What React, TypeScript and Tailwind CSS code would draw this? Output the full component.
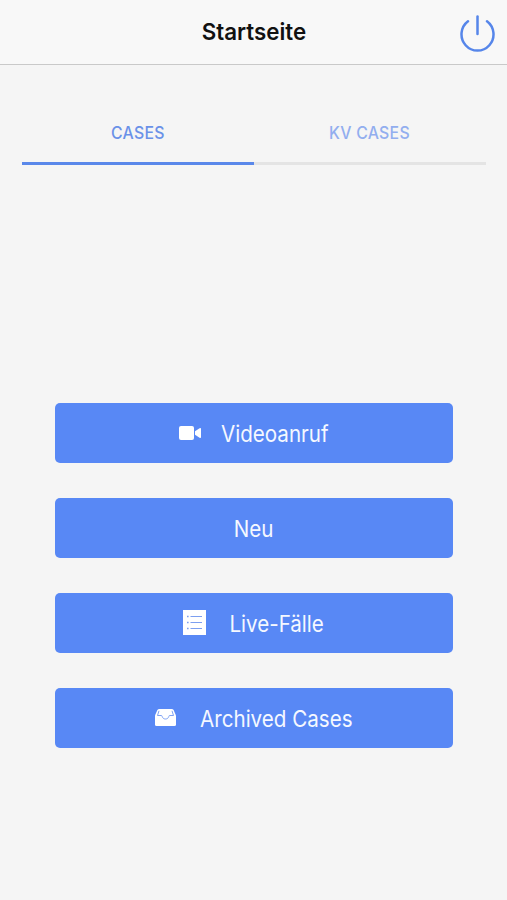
import type { ReactNode } from 'react';

const tabs = [
  { label: 'CASES', active: true },
  { label: 'KV CASES', active: false },
];

const PowerIcon = () => (
  <svg className="h-[38px] w-[36px]" viewBox="0 0 36 38" fill="none" stroke="#5686ea" strokeWidth="2.5" strokeLinecap="round">
    <path d="M18.5 2.5V20" />
    <path d="M9 7.2A16 16.3 0 1 0 28 7.2" />
  </svg>
);

const VideoIcon = () => (
  <svg className="h-[14px] w-[22px]" viewBox="0 0 22 14" fill="currentColor">
    <rect width="15" height="14" rx="2" />
    <path d="M16 5.2L20.6 2.3Q22 1.6 22 3V11Q22 12.4 20.6 11.7L16 8.8Z" />
  </svg>
);

const ListIcon = () => (
  <svg className="h-[25px] w-[23px]" viewBox="0 0 23 25">
    <path d="M0 0H23V25H0Z" fill="currentColor" />
    <g stroke="#7d9ff0" strokeWidth="1">
      <path d="M7.5 6.5H19M7.5 12.5H19M7.5 18.5H19" />
      <path d="M4 6.5H5.6M4 12.5H5.6M4 18.5H5.6" strokeWidth="1.6" />
    </g>
  </svg>
);

const ArchiveIcon = () => (
  <svg className="h-[17px] w-[21px]" viewBox="0 0 21 17">
    <path d="M4.4 0H16.6Q18 0 18.6 1L21 6.500V15.500Q21 17 19.500 17H1.500Q0 17 0 15.500V6.500L2.400 1Q3 0 4.400 0Z" fill="currentColor" />
    <path
      d="M4 1.800L2.500 6.500H6.500C7.300 6.500 7 10 10.500 10S13.700 6.500 14.500 6.500H18.500L17 1.800"
      fill="none"
      stroke="#7097f3"
      strokeWidth="0.9"
    />
  </svg>
);

type Action = { label: string; icon?: ReactNode; gap: string; text: string };

const actions: Action[] = [
  { label: 'Videoanruf', icon: <VideoIcon />, gap: 'gap-[21px]', text: 'w-[107px]' },
  { label: 'Neu', gap: '', text: 'w-[39px]' },
  { label: 'Live-Fälle', icon: <ListIcon />, gap: 'gap-[24px]', text: 'w-[95px]' },
  { label: 'Archived Cases', icon: <ArchiveIcon />, gap: 'gap-[24px]', text: 'w-[153px]' },
];

export default function App() {
  return (
    <div className="flex h-[900px] w-[507px] flex-col bg-[#f5f5f5] font-['Inter','Liberation_Sans',sans-serif]">
      <header className="grid h-[65px] grid-cols-[48px_1fr_48px] items-center border-b border-[#c9c9c9] bg-[#f8f8f8]">
        <h1 className="col-start-2 flex justify-center text-[23.5px] font-semibold text-[#111]">
          <span className="scale-x-[0.95]">Startseite</span>
        </h1>
        <button aria-label="Abmelden" className="pt-[2px]">
          <PowerIcon />
        </button>
      </header>

      <nav className="mt-[44px] mr-[21px] ml-[22px] flex">
        {tabs.map((tab) => (
          <button
            key={tab.label}
            className={`flex h-[56px] flex-1 justify-center border-b-[3px] pt-[12px] pr-px text-[17px] leading-6 font-medium tracking-[0.3px] ${
              tab.active ? 'border-[#5a88ea] text-[#6a91e8]' : 'border-[#e4e4e4] text-[#92aeef]'
            }`}
          >
            <span className="scale-x-[0.93]">{tab.label}</span>
          </button>
        ))}
      </nav>

      <main className="mt-[237.5px] flex flex-col gap-[34.5px] px-[54.5px]">
        {actions.map((action) => (
          <button
            key={action.label}
            className={`flex h-[60.5px] items-center justify-center rounded-[5px] bg-[#5888f5] pt-[3px] text-[#f5f8ff] ${action.gap}`}
          >
            {action.icon && <span className="-mt-[3px] text-white">{action.icon}</span>}
            <span className={`flex justify-center text-[22.5px] whitespace-nowrap ${action.text}`}>
              <span className="scale-x-[0.915]">{action.label}</span>
            </span>
          </button>
        ))}
      </main>
    </div>
  );
}
